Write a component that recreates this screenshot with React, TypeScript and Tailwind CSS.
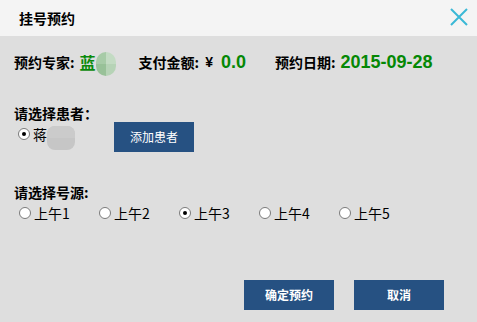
import React from "react";

const font = { fontFamily: '"Noto Sans CJK SC", "Liberation Sans", sans-serif' };
const num = { fontFamily: '"Liberation Sans", sans-serif' };

function Radio({ checked, label }: { checked?: boolean; label: React.ReactNode }) {
  return (
    <div className="flex h-[14px] items-center gap-[3px]">
      <span className="flex h-[12px] w-[12px] items-center justify-center rounded-full border border-[#7a7a7a] bg-white">
        {checked && <span className="h-[4px] w-[4px] rounded-full bg-black" />}
      </span>
      <span className="text-[14px] leading-none text-black">{label}</span>
    </div>
  );
}

export default function App() {
  return (
    <div className="flex h-[322px] w-[477px] flex-col bg-[#dedede]" style={font}>
      <div className="flex h-[36px] items-center justify-between bg-[#f4f4f4] pl-[19px] pr-[8px]">
        <span className="text-[14px] font-bold text-black">挂号预约</span>
        <svg width="20" height="20" viewBox="0 0 20 20" className="mt-[-2px]">
          <path d="M2 2 L18 18 M18 2 L2 18" stroke="#3ab8d6" strokeWidth="2" />
        </svg>
      </div>
      <div className="flex flex-col px-[14px]">
        <div className="mt-[14px] flex h-[24px] items-center text-[14px] font-bold leading-none text-black">
          <span>预约专家:</span>
          <span className="ml-[5px] text-[16px] text-[#0a8a0a]">蓝</span>
          <span className="relative mt-[4px] h-[24px] w-[20px] overflow-hidden rounded-full">
            <span className="absolute left-0 top-0 h-[12px] w-[10px] bg-[#a7cba7]" />
            <span className="absolute left-[10px] top-0 h-[12px] w-[10px] bg-[#c3dbc3]" />
            <span className="absolute left-0 top-[12px] h-[12px] w-[10px] bg-[#98c198]" />
            <span className="absolute left-[10px] top-[12px] h-[12px] w-[10px] bg-[#b6d3b6]" />
          </span>
          <span className="ml-[23px]">支付金额:</span>
          <span className="ml-[6px]" style={num}>¥</span>
          <span className="ml-[8px] text-[18px] text-[#058805]" style={num}>0.0</span>
          <span className="ml-[29px]">预约日期:</span>
          <span className="ml-[5px] text-[18px] text-[#058805]" style={num}>2015-09-28</span>
        </div>
        <div className="mt-[32px] h-[14px] text-[14px] font-bold leading-none text-black">请选择患者：</div>
        <div className="mt-[2px] flex items-start">
          <div className="mt-[5px] flex w-[100px] items-start">
            <div className="ml-[4px] flex h-[14px] items-center gap-[3px]">
              <span className="flex h-[12px] w-[12px] items-center justify-center rounded-full border border-[#7a7a7a] bg-white">
                <span className="h-[4px] w-[4px] rounded-full bg-black" />
              </span>
              <span className="text-[14px] leading-none text-black">蒋</span>
            </div>
            <span className="mt-[-1px] h-[24px] w-[28px] overflow-hidden rounded-[8px] bg-[#c6c6c6]">
              <span className="block h-[12px] w-full bg-[#cbcbcb]" />
            </span>
          </div>
          <button className="h-[30px] w-[80px] bg-[#265182] text-[12px] text-white">添加患者</button>
        </div>
        <div className="mt-[33px] h-[14px] text-[14px] font-bold leading-none text-black">请选择号源:</div>
        <div className="ml-[5px] mt-[7px] flex">
          <div className="w-[80px]"><Radio label="上午1" /></div>
          <div className="w-[80px]"><Radio label="上午2" /></div>
          <div className="w-[80px]"><Radio checked label="上午3" /></div>
          <div className="w-[80px]"><Radio label="上午4" /></div>
          <div className="w-[80px]"><Radio label="上午5" /></div>
        </div>
      </div>
      <div className="mt-auto mb-[12px] flex justify-end gap-[20px] pr-[33px]">
        <button className="h-[30px] w-[90px] bg-[#265182] text-[12px] font-bold text-white">确定预约</button>
        <button className="h-[30px] w-[90px] bg-[#265182] text-[12px] font-bold text-white">取消</button>
      </div>
    </div>
  );
}
